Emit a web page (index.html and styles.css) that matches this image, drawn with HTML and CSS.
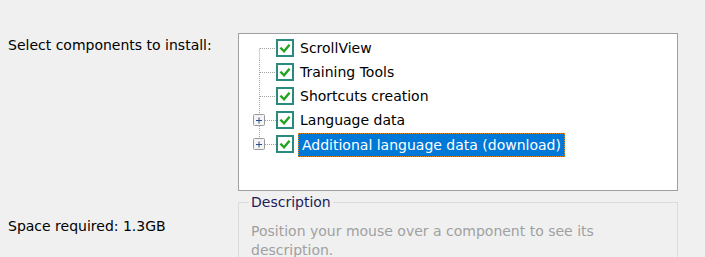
FILE: index.html
```html
<!DOCTYPE html>
<html lang="en">
<head>
  <meta charset="UTF-8">
  <title>Choose Components</title>
  <link rel="stylesheet" href="styles.css">
</head>
<body>
  <div class="page">
    <div class="row row-top">
      <div class="label">Select components to install:</div>
      <div class="tree">
        <div class="node first">
          <svg class="lines" width="37" height="24" viewBox="0 0 37 24">
            <path d="M20.5 12.5V24M21 12.5H37" />
          </svg>
          <span class="check"><svg width="15" height="15" viewBox="0 0 15 15"><path d="M3.5 7.5l3 3 5-6" /></svg></span>
          <span class="text">ScrollView</span>
        </div>
        <div class="node">
          <svg class="lines" width="37" height="24" viewBox="0 0 37 24">
            <path d="M20.5 0V24M21 12.5H37" />
          </svg>
          <span class="check"><svg width="15" height="15" viewBox="0 0 15 15"><path d="M3.5 7.5l3 3 5-6" /></svg></span>
          <span class="text">Training Tools</span>
        </div>
        <div class="node">
          <svg class="lines" width="37" height="24" viewBox="0 0 37 24">
            <path d="M20.5 0V24M21 12.5H37" />
          </svg>
          <span class="check"><svg width="15" height="15" viewBox="0 0 15 15"><path d="M3.5 7.5l3 3 5-6" /></svg></span>
          <span class="text">Shortcuts creation</span>
        </div>
        <div class="node">
          <svg class="lines" width="37" height="24" viewBox="0 0 37 24">
            <path d="M20.5 0V24M26 12.5H37" />
            <rect class="plus-box" x="14.5" y="6.5" width="11" height="11" rx="1" />
            <path class="plus" d="M17 12.5H23M20 9.5V15.5" />
          </svg>
          <span class="check"><svg width="15" height="15" viewBox="0 0 15 15"><path d="M3.5 7.5l3 3 5-6" /></svg></span>
          <span class="text">Language data</span>
        </div>
        <div class="node last">
          <svg class="lines" width="37" height="24" viewBox="0 0 37 24">
            <path d="M20.5 0V12M26 12.5H37" />
            <rect class="plus-box" x="14.5" y="6.5" width="11" height="11" rx="1" />
            <path class="plus" d="M17 12.5H23M20 9.5V15.5" />
          </svg>
          <span class="check"><svg width="15" height="15" viewBox="0 0 15 15"><path d="M3.5 7.5l3 3 5-6" /></svg></span>
          <span class="text selected">Additional language data (download)</span>
        </div>
      </div>
    </div>

    <div class="row row-bottom">
      <div class="label space">Space required: 1.3GB</div>
      <fieldset class="group">
        <legend class="group-title">Description</legend>
        <div class="group-body">Position your mouse over a component to see its description.</div>
      </fieldset>
    </div>
  </div>
</body>
</html>
```

FILE: styles.css
```css
* {
  margin: 0;
  padding: 0;
  box-sizing: border-box;
}

body {
  background: #f0f0f0;
  font-family: 'DejaVu Sans', Tahoma, sans-serif;
  font-size: 14px;
  color: #000000;
  width: 705px;
  height: 257px;
  overflow: hidden;
}

.page {
  padding: 33px 0 0 8px;
  display: flex;
  flex-direction: column;
}

.row {
  display: flex;
}

.label {
  width: 230px;
  flex-shrink: 0;
  line-height: 17px;
}

.row-top .label {
  padding-top: 4px;
}

/* tree view */
.tree {
  width: 440px;
  height: 158px;
  background: #ffffff;
  border: 1px solid #a0a0a0;
  padding-top: 2px;
}

.node {
  display: flex;
  align-items: center;
  height: 24px;
}

.lines {
  flex-shrink: 0;
  display: block;
}

.lines path {
  fill: none;
  stroke: #a0a0a0;
  stroke-width: 1;
  stroke-dasharray: 1 1;
}

.lines .plus-box {
  fill: #f4f4f4;
  stroke: #9a9a9a;
  stroke-width: 1;
}

.lines .plus {
  stroke: #2d4a8c;
  stroke-dasharray: none;
}

.check {
  width: 18px;
  height: 18px;
  border: 2px solid #2a8a80;
  background: #ffffff;
  display: flex;
  align-items: center;
  justify-content: center;
  flex-shrink: 0;
}

.check path {
  fill: none;
  stroke: #22a322;
  stroke-width: 2.6;
  stroke-linecap: square;
}

.text {
  margin-left: 4px;
  padding: 0 2px;
  line-height: 24px;
  white-space: nowrap;
}

.text.selected {
  background: #0078d7;
  color: #ffffff;
  outline: 1px dotted #e08a1e;
  outline-offset: -1px;
  padding: 0 4px;
  margin-top: 2px;
}

/* description group */
.row-bottom {
  margin-top: 2px;
}

.space {
  padding-top: 25px;
}

.group {
  width: 440px;
  height: 66px;
  border: 1px solid #dcdcdc;
  padding: 0 12px;
  overflow: hidden;
}

.group-title {
  margin-left: -2px;
  padding: 0 2px;
  color: #1c1c5a;
  line-height: 18px;
}

.group-body {
  color: #a0a0a0;
  line-height: 19px;
  padding-top: 11px;
  width: 400px;
}
```
